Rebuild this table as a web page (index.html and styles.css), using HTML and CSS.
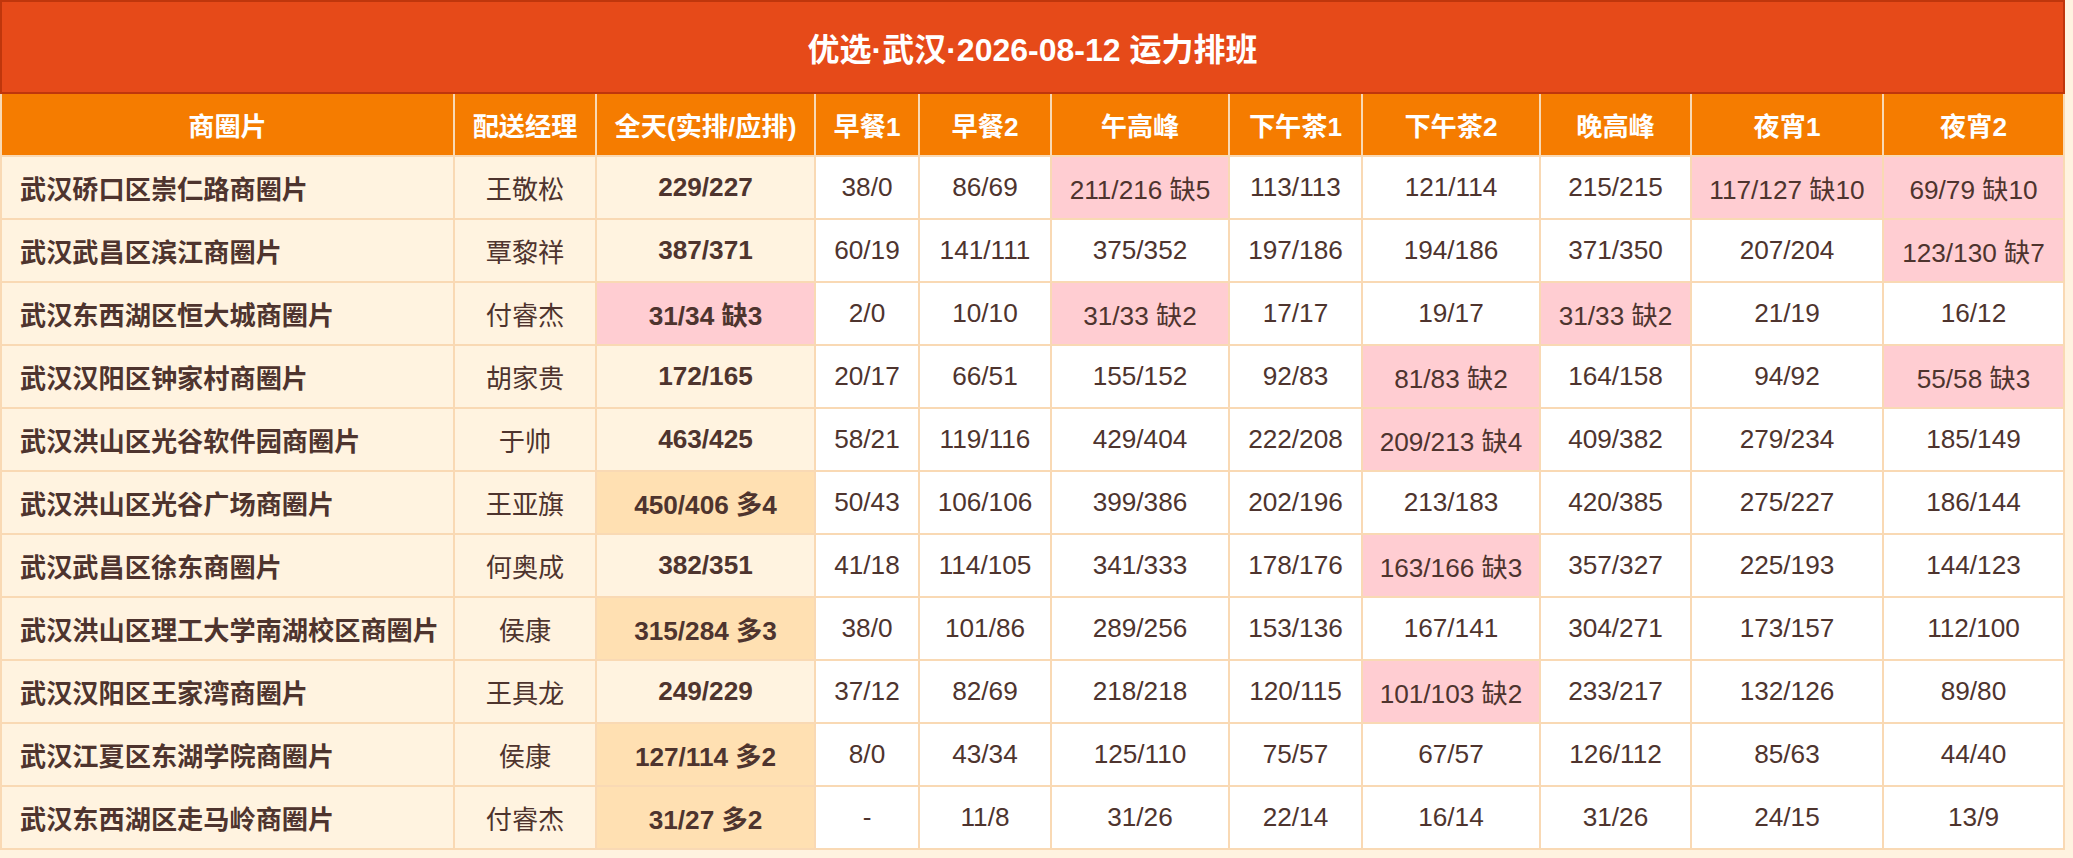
FILE: index.html
```html
<!DOCTYPE html>
<html lang="zh-CN">
<head>
<meta charset="utf-8">
<title>优选·武汉·2026-08-12 运力排班</title>
<link rel="stylesheet" href="styles.css">
</head>
<body>
<div class="sheet">
  <div class="title">优选·武汉·2026-08-12 运力排班</div>
  <table class="grid">
    <thead>
      <tr>
        <th class="c1">商圈片</th><th class="c2">配送经理</th><th class="c3">全天(实排/应排)</th>
        <th class="c4">早餐1</th><th class="c5">早餐2</th><th class="c6">午高峰</th><th class="c7">下午茶1</th>
        <th class="c8">下午茶2</th><th class="c9">晚高峰</th><th class="c10">夜宵1</th><th class="c11">夜宵2</th>
      </tr>
    </thead>
    <tbody>
      <tr><td class="area">武汉硚口区崇仁路商圈片</td><td class="mgr">王敬松</td><td class="total">229/227</td><td>38/0</td><td>86/69</td><td class="short">211/216 缺5</td><td>113/113</td><td>121/114</td><td>215/215</td><td class="short">117/127 缺10</td><td class="short">69/79 缺10</td></tr>
      <tr><td class="area">武汉武昌区滨江商圈片</td><td class="mgr">覃黎祥</td><td class="total">387/371</td><td>60/19</td><td>141/111</td><td>375/352</td><td>197/186</td><td>194/186</td><td>371/350</td><td>207/204</td><td class="short">123/130 缺7</td></tr>
      <tr><td class="area">武汉东西湖区恒大城商圈片</td><td class="mgr">付睿杰</td><td class="total short">31/34 缺3</td><td>2/0</td><td>10/10</td><td class="short">31/33 缺2</td><td>17/17</td><td>19/17</td><td class="short">31/33 缺2</td><td>21/19</td><td>16/12</td></tr>
      <tr><td class="area">武汉汉阳区钟家村商圈片</td><td class="mgr">胡家贵</td><td class="total">172/165</td><td>20/17</td><td>66/51</td><td>155/152</td><td>92/83</td><td class="short">81/83 缺2</td><td>164/158</td><td>94/92</td><td class="short">55/58 缺3</td></tr>
      <tr><td class="area">武汉洪山区光谷软件园商圈片</td><td class="mgr">于帅</td><td class="total">463/425</td><td>58/21</td><td>119/116</td><td>429/404</td><td>222/208</td><td class="short">209/213 缺4</td><td>409/382</td><td>279/234</td><td>185/149</td></tr>
      <tr><td class="area">武汉洪山区光谷广场商圈片</td><td class="mgr">王亚旗</td><td class="total over">450/406 多4</td><td>50/43</td><td>106/106</td><td>399/386</td><td>202/196</td><td>213/183</td><td>420/385</td><td>275/227</td><td>186/144</td></tr>
      <tr><td class="area">武汉武昌区徐东商圈片</td><td class="mgr">何奥成</td><td class="total">382/351</td><td>41/18</td><td>114/105</td><td>341/333</td><td>178/176</td><td class="short">163/166 缺3</td><td>357/327</td><td>225/193</td><td>144/123</td></tr>
      <tr><td class="area">武汉洪山区理工大学南湖校区商圈片</td><td class="mgr">侯康</td><td class="total over">315/284 多3</td><td>38/0</td><td>101/86</td><td>289/256</td><td>153/136</td><td>167/141</td><td>304/271</td><td>173/157</td><td>112/100</td></tr>
      <tr><td class="area">武汉汉阳区王家湾商圈片</td><td class="mgr">王具龙</td><td class="total">249/229</td><td>37/12</td><td>82/69</td><td>218/218</td><td>120/115</td><td class="short">101/103 缺2</td><td>233/217</td><td>132/126</td><td>89/80</td></tr>
      <tr><td class="area">武汉江夏区东湖学院商圈片</td><td class="mgr">侯康</td><td class="total over">127/114 多2</td><td>8/0</td><td>43/34</td><td>125/110</td><td>75/57</td><td>67/57</td><td>126/112</td><td>85/63</td><td>44/40</td></tr>
      <tr><td class="area">武汉东西湖区走马岭商圈片</td><td class="mgr">付睿杰</td><td class="total over">31/27 多2</td><td>-</td><td>11/8</td><td>31/26</td><td>22/14</td><td>16/14</td><td>31/26</td><td>24/15</td><td>13/9</td></tr>
    </tbody>
  </table>
</div>
</body>
</html>
```
FILE: styles.css
```css
* { box-sizing: border-box; }

html, body {
  margin: 0;
  padding: 0;
  background: #fff3e0;
}

body {
  font-family: "Liberation Sans", "Noto Sans CJK SC", sans-serif;
  color: #4e342e;
}

.sheet {
  width: 2065px;
}

.title {
  height: 94px;
  background: #e64a19;
  border: 2px solid #bf360c;
  color: #ffffff;
  font-weight: bold;
  font-size: 32px;
  display: flex;
  align-items: center;
  justify-content: center;
}

.grid {
  width: 2065px;
  table-layout: fixed;
  border-collapse: separate;
  border-spacing: 0;
  font-size: 26.2px;
}

.grid th,
.grid td {
  height: 63px;
  padding: 0 4px;
  text-align: center;
  vertical-align: middle;
  white-space: nowrap;
  border-right: 2px solid #f9d9b4;
  border-bottom: 2px solid #f9d9b4;
  background: #ffffff;
}

.grid th:first-child,
.grid td:first-child {
  border-left: 2px solid #f9d9b4;
}

.grid th {
  background: #f57c00;
  color: #ffffff;
  font-weight: bold;
}

.c1 { width: 455px; }
.c2 { width: 142px; }
.c3 { width: 219px; }
.c4 { width: 104px; }
.c5 { width: 132px; }
.c6 { width: 178px; }
.c7 { width: 133px; }
.c8 { width: 178px; }
.c9 { width: 151px; }
.c10 { width: 192px; }
.c11 { width: 181px; }

.grid td.area {
  text-align: left;
  padding-left: 18px;
  font-weight: bold;
  background: #fff3e0;
}

.grid td.mgr {
  background: #fff3e0;
}

.grid td.total {
  font-weight: bold;
  background: #fff3e0;
}

.grid td.short {
  background: #ffcdd2;
}

.grid td.over {
  background: #ffe0b2;
}
```
